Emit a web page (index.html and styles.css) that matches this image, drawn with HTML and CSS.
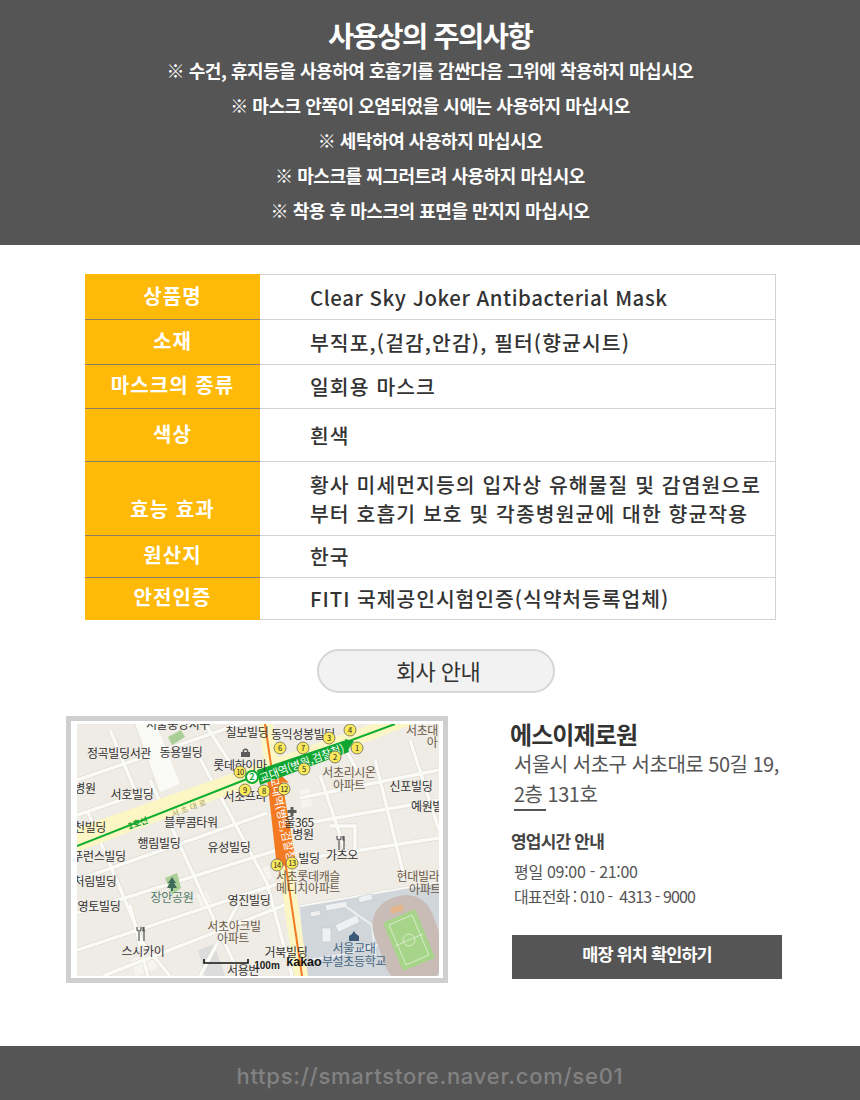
FILE: index.html
```html
<!DOCTYPE html>
<html lang="ko">
<head>
<meta charset="utf-8">
<title>사용상의 주의사항</title>
<link rel="stylesheet" href="styles.css">
</head>
<body>
<header class="notice">
  <h1>사용상의 주의사항</h1>
  <p class="first">※ 수건, 휴지등을 사용하여 호흡기를 감싼다음 그위에 착용하지 마십시오</p>
  <p>※ 마스크 안쪽이 오염되었을 시에는 사용하지 마십시오</p>
  <p>※ 세탁하여 사용하지 마십시오</p>
  <p>※ 마스크를 찌그러트려 사용하지 마십시오</p>
  <p>※ 착용 후 마스크의 표면을 만지지 마십시오</p>
</header>
<main>
  <table class="spec">
    <tr class="r1"><th>상품명</th><td>Clear Sky Joker Antibacterial Mask</td></tr>
    <tr class="r2"><th>소재</th><td>부직포,(겉감,안감), 필터(향균시트)</td></tr>
    <tr class="r3"><th>마스크의 종류</th><td>일회용 마스크</td></tr>
    <tr class="r4"><th>색상</th><td>흰색</td></tr>
    <tr class="r5"><th class="low">효능 효과</th><td>황사 미세먼지등의 입자상 유해물질 및 감염원으로<br>부터 호흡기 보호 및 각종병원균에 대한 향균작용</td></tr>
    <tr class="r6"><th>원산지</th><td>한국</td></tr>
    <tr class="r7"><th>안전인증</th><td>FITI 국제공인시험인증(식약처등록업체)</td></tr>
  </table>
  <div class="pill-row"><span class="pill">회사 안내</span></div>
  <section class="company">
    <div class="map">
      <svg viewBox="77 724 362 252" width="362" height="252" xmlns="http://www.w3.org/2000/svg">
        <defs>
          <path id="roads" d="M77 780L260 717M77 880L267 813M77 913L277 850M77 950L280 883M103 976L290 903M300 798L439 770M300 907L439 883M296 825L439 800M296 860L439 838M77 815L150 790M137 724L157 780M197 753L267 883L292 976M87 810L143 943L170 976M150 780L205 900L240 976M110 730L135 790M205 724L235 770M320 775L345 850M375 760L405 880M410 740L439 830M280 835L296 905M330 826L355 826L355 850M340 740L360 775M130 905L150 985M240 900L200 976"/>
        </defs>
        <rect class="land" x="77" y="724" width="362" height="252"/>
        <polygon class="block-g" points="198,950 214,944 225,976 205,976"/>
        <polygon class="block-l" points="196,895 206,890 212,905 203,910"/>
        <polygon class="block-l" points="130,960 152,952 158,968 136,976"/>
        <polygon class="block-l" points="257,870 268,866 272,878 262,882"/>
        <polygon class="block-l" points="300,790 310,788 312,806 302,808"/>
        <use href="#roads" class="road-edge"/>
        <use href="#roads" class="road"/>
        <polygon class="wide" points="137,724 156,724 180,784 160,792"/>
        <polygon class="park" points="168,737 181,730 185,737 172,745"/>
        <polygon class="park" points="165,878 177,873 181,888 172,895"/>
        <polygon class="school" points="300,907 439,883 439,976 306,976"/>
        <rect class="block-w" x="325" y="905" width="22" height="6" transform="rotate(-10 325 905)"/>
        <rect class="block-w" x="310" y="912" width="10" height="5" transform="rotate(-10 310 912)"/>
        <rect class="block-w" x="335" y="925" width="24" height="8" transform="rotate(-25 335 925)"/>
        <rect class="block-w" x="322" y="928" width="9" height="14"/>
        <rect class="block-w" x="358" y="897" width="14" height="6" transform="rotate(-14 358 897)"/>
        <path class="school-road" d="M310 960L340 955L378 945M345 906L372 925L375 955"/>
        <rect class="track" x="378" y="895" width="62" height="90" rx="28" transform="rotate(-20 409 940)"/>
        <polygon class="field" points="383,923 415,909 435,958 403,971"/>
        <path class="field-line" d="M389 925L412 915L429 955L406 965ZM409 940m-6 0a6 6 0 1 0 12 0a6 6 0 1 0-12 0M395 946L423 934"/>
        <polygon class="block-b" points="390,908 402,904 404,910 392,914"/>
        <polygon class="main-road" points="77,828 372,724 413,724 77,852"/>
        <polygon class="main-road" points="259,724 273,724 308,976 294,976"/>
        <path class="line-orange" d="M265 724L302 976"/>
        <path class="line-green" d="M77 846L252 777L395 724"/>
        <polygon class="orange-label" points="267,778 281,775 296,862 277,868"/>
        <polygon class="orange-arrow" points="274,768 289,783 268,780"/>
        <polygon class="green-label" points="257,770 346,740 349,752 260,785"/>
        <polygon class="green-arrow" points="345,739 354,741 348,750"/>
        <text class="lbl-rot-g" transform="translate(303 767) rotate(-20)">교대역(병원,검찰청)</text>
        <text class="lbl-rot-o" transform="translate(279 821) rotate(78)">교대역(병원,검찰청)</text>
        <text class="lbl-road" transform="translate(190 811) rotate(-20)">서 초 대 로</text>
        <text class="lbl-line" transform="translate(139 826) rotate(-20)">2호선</text>

        <text class="lbl" x="178" y="729">서울중앙지구</text>
        <text class="lbl" x="247" y="737">칠보빌딩</text>
        <text class="lbl" x="303" y="739">동익성봉빌딩</text>
        <text class="lbl br" x="422" y="735">서초대</text>
        <text class="lbl br" x="432" y="747">아</text>
        <text class="lbl" x="119" y="758">정곡빌딩서관</text>
        <text class="lbl" x="181" y="757">동용빌딩</text>
        <text class="lbl" x="240" y="770">롯데하이마</text>
        <text class="lbl br" x="349" y="777">서초리시온</text>
        <text class="lbl br" x="349" y="790">아파트</text>
        <text class="lbl" x="411" y="791">신포빌딩</text>
        <text class="lbl" x="245" y="801">서초프라</text>
        <text class="lbl" x="132" y="799">서호빌딩</text>
        <text class="lbl" x="85" y="793">병원</text>
        <text class="lbl" x="427" y="811">예원빌</text>
        <text class="lbl" x="299" y="827">울365</text>
        <text class="lbl" x="303" y="839">병원</text>
        <text class="lbl" x="191" y="827">블루콤타워</text>
        <text class="lbl" x="90" y="832">천빌딩</text>
        <text class="lbl" x="159" y="848">행림빌딩</text>
        <text class="lbl" x="229" y="852">유성빌딩</text>
        <text class="lbl" x="342" y="860">가츠오</text>
        <text class="lbl" x="99" y="861">푸런스빌딩</text>
        <text class="lbl" x="309" y="863">빌딩</text>
        <text class="lbl br" x="308" y="881">서초롯데캐슬</text>
        <text class="lbl br" x="308" y="893">메디치아파트</text>
        <text class="lbl br" x="418" y="881">현대빌라</text>
        <text class="lbl br" x="425" y="894">아파트</text>
        <text class="lbl gr" x="172" y="902">장안공원</text>
        <text class="lbl" x="95" y="886">처림빌딩</text>
        <text class="lbl" x="99" y="911">영토빌딩</text>
        <text class="lbl" x="249" y="905">영진빌딩</text>
        <text class="lbl br" x="234" y="931">서초아크빌</text>
        <text class="lbl br" x="233" y="943">아파트</text>
        <text class="lbl bl" x="354" y="953">서울교대</text>
        <text class="lbl bl" x="354" y="966">부설초등학교</text>
        <text class="lbl" x="143" y="956">스시카이</text>
        <text class="lbl" x="286" y="957">거북빌딩</text>
        <text class="lbl" x="243" y="975">서용빈</text>

        <path class="pin" d="M172 877l4 6h-2l3 5h-4v3h-2v-3h-4l3-5h-2z"/>
        <path class="pin-dark" d="M241 752h9v5h-9zM242.500 752a3 3.500 0 0 1 6 0h-1.500a1.500 2 0 0 0-3 0z"/>
        <path class="pin-dark" d="M290.500 807h3v3h3v3h-3v3h-3v-3h-3v-3h3z"/>
        <path class="fork" d="M339 841v9M337 836v2a2 2 0 0 0 4 0v-2M344 836v14M343 836v4h2"/>
        <path class="fork" d="M139 932v9M137 927v2a2 2 0 0 0 4 0v-2M144 927v14M143 927v4h2"/>
        <path class="pin-blue" d="M354 931l2 3 3 2v5h-10v-5l3-2z"/>

        <circle class="st2" cx="252" cy="777" r="6"/>
        <text class="st2t" x="252" y="780">2</text>

        <circle class="mk" cx="357" cy="748" r="6"/><text class="mkt" x="357" y="750.500">1</text>
        <circle class="mk" cx="335" cy="757" r="6"/><text class="mkt" x="335" y="759.500">2</text>
        <circle class="mk" cx="329" cy="738" r="6"/><text class="mkt" x="329" y="740.500">3</text>
        <circle class="mk" cx="350" cy="730" r="6"/><text class="mkt" x="350" y="732.500">4</text>
        <circle class="mk" cx="304" cy="769" r="6"/><text class="mkt" x="304" y="771.500">5</text>
        <circle class="mk" cx="280" cy="748" r="6"/><text class="mkt" x="280" y="750.500">6</text>
        <circle class="mk" cx="303" cy="748" r="6"/><text class="mkt" x="303" y="750.500">7</text>
        <circle class="mk" cx="264" cy="791" r="6"/><text class="mkt" x="264" y="793.500">8</text>
        <circle class="mk" cx="245" cy="790" r="6"/><text class="mkt" x="245" y="792.500">9</text>
        <circle class="mk" cx="240" cy="772" r="6"/><text class="mkt" x="240" y="774.500">10</text>
        <circle class="mk" cx="284" cy="789" r="6"/><text class="mkt" x="284" y="791.500">12</text>
        <circle class="mk" cx="292" cy="863" r="6"/><text class="mkt" x="292" y="865.500">13</text>
        <circle class="mk" cx="277" cy="865" r="6"/><text class="mkt" x="277" y="867.500">14</text>

        <path class="scale" d="M204 959v4h44v-4"/>
        <text class="scale-t" x="267" y="969">100m</text>
        <text class="kakao" x="304" y="966">kakao</text>
      </svg>
    </div>
    <div class="info">
      <h2>에스이제로원</h2>
      <p class="addr">서울시 서초구 서초대로 50길 19,<br>2층 131호</p>
      <div class="rule"></div>
      <h3>영업시간 안내</h3>
      <p class="hours">평일 09:00 - 21:00</p>
      <p class="hours tight">대표전화 : 010 -&nbsp; 4313 - 9000</p>
      <div class="cta">매장 위치 확인하기</div>
    </div>
  </section>
</main>
<footer class="foot">https://smartstore.naver.com/se01</footer>
</body>
</html>
```
FILE: styles.css
```css
* { box-sizing: border-box; }
html, body { margin: 0; padding: 0; }
body {
  position: relative;
  width: 860px;
  height: 1100px;
  background: #fff;
  font-family: "Noto Sans CJK KR", "Noto Sans", sans-serif;
  overflow: hidden;
}
.notice {
  height: 245px;
  background: #555;
  color: #fff;
  text-align: center;
  padding-top: 16px;
}
.notice h1 {
  margin: 0;
  font-size: 28.500px;
  line-height: 37px;
  font-weight: 700;
  letter-spacing: -1.5px;
}
.notice p {
  margin: 0;
  font-size: 18px;
  line-height: 35px;
  font-weight: 700;
  letter-spacing: -0.45px;
}
.spec {
  width: 691px;
  margin: 29px 0 0 85px;
  border-collapse: collapse;
  table-layout: fixed;
  color: #333;
}
.spec th {
  width: 175px;
  padding: 0 0 3px;
  background: #ffb908;
  color: #fff;
  font-size: 20px;
  font-weight: 700;
  letter-spacing: 1.100px;
  text-align: center;
  border: 0;
  border-top: 1px solid #8e7b68;
  border-bottom: 1px solid #8e7b68;
  line-height: 1.2;
}
.spec tr:first-child th { border-top-color: #ffb908; }
.spec tr:last-child th { border-bottom-color: #ffb908; }
.spec th.low { vertical-align: bottom; padding-bottom: 14px; }
.spec td {
  padding: 0 0 0 50px;
  font-size: 20.400px;
  font-weight: 500;
  line-height: 29px;
  letter-spacing: 1.100px;
  border: 1px solid #d2d2d2;
  border-left: 0;
  white-space: nowrap;
  color: #333;
}
.spec .r1 td { letter-spacing: 0.550px; }
.spec .r7 td { letter-spacing: 0.950px; }
.r1 { height: 45px; }
.r2 { height: 45px; }
.r3 { height: 44px; }
.r4 { height: 53px; }
.r5 { height: 74px; }
.r6 { height: 42px; }
.r7 { height: 42px; }
.pill-row {
  display: flex;
  justify-content: center;
  margin-top: 29px;
  padding-left: 12px;
}
.pill {
  width: 238px;
  height: 44px;
  padding-left: 4px;
  border: 2px solid #d6d6d6;
  border-radius: 22px;
  background: #f2f2f2;
  color: #333;
  font-size: 22px;
  line-height: 39px;
  text-align: center;
  letter-spacing: -0.6px;
}
.company {
  display: flex;
  margin: 23px 0 0 66px;
}
.map {
  width: 382px;
  height: 267px;
  padding: 3px 4px 2px 6px;
  background: #fff;
  border: 5px solid #cfcfcf;
  line-height: 0;
}
.map svg { display: block; }
.land { fill: #efece5; }
.block-g { fill: #dcdcdc; }
.block-l { fill: #f6f4ee; }
.road-edge { fill: none; stroke: #dedad2; stroke-width: 4.800; }
.road { fill: none; stroke: #fafaf7; stroke-width: 3.500; }
.wide { fill: #fafaf7; }
.park { fill: #a9cf96; }
.school { fill: #d0d6da; }
.block-w { fill: #eef0f1; stroke: #bcc3c8; stroke-width: 0.5; }
.school-road { fill: none; stroke: #eef0f1; stroke-width: 2; }
.track { fill: #c9bcb6; }
.field { fill: #a6d489; }
.field-line { fill: none; stroke: #e4f2d8; stroke-width: 0.8; }
.block-b { fill: #e3b48c; }
.main-road { fill: #fbf6c4; }
.line-orange { fill: none; stroke: #f47a22; stroke-width: 2; }
.line-green { fill: none; stroke: #10ae2f; stroke-width: 2; }
.orange-label, .orange-arrow { fill: #f47a22; }
.green-label, .green-arrow { fill: #10a632; }
.lbl {
  font-size: 12px;
  letter-spacing: -0.35px;
  fill: #333;
  text-anchor: middle;
}
.lbl.br { fill: #6b5a48; }
.lbl.gr { fill: #4f7a6a; }
.lbl.bl { fill: #466480; }
.lbl-rot-g, .lbl-rot-o {
  font-size: 11px;
  fill: #fff;
  text-anchor: middle;
  letter-spacing: -0.2px;
}
.lbl-road { font-size: 8px; fill: #a8a368; text-anchor: middle; }
.lbl-line { font-size: 8.500px; fill: #0f9e2c; font-weight: 700; text-anchor: middle; }
.pin { fill: #3f6b5a; }
.pin-dark { fill: #5a5a5a; }
.pin-blue { fill: #3c5a78; }
.fork { fill: none; stroke: #555; stroke-width: 1.200; }
.st2 { fill: #fff; stroke: #10ae2f; stroke-width: 2; }
.st2t { font-size: 9px; font-weight: 700; fill: #10ae2f; text-anchor: middle; }
.mk { fill: #f8e85a; stroke: #555; stroke-width: 0.7; }
.mkt { font-size: 7.500px; fill: #222; text-anchor: middle; letter-spacing: -0.4px; }
.scale { fill: none; stroke: #111; stroke-width: 1.600; }
.scale-t { font-size: 10px; font-weight: 700; fill: #222; text-anchor: middle; font-family: "Liberation Sans", sans-serif; }
.kakao { font-size: 12.500px; font-weight: 700; fill: #111; text-anchor: middle; font-family: "Liberation Sans", sans-serif; }
.info {
  width: 290px;
  margin-left: 62px;
  color: #555;
}
.info h2 {
  margin: 0;
  color: #333;
  font-size: 24px;
  line-height: 36px;
  font-weight: 700;
  letter-spacing: -0.9px;
}
.addr {
  margin: -3px 0 0 4px;
  font-size: 20px;
  line-height: 30px;
  font-weight: 400;
  letter-spacing: -0.5px;
  white-space: nowrap;
}
.rule {
  width: 32px;
  height: 2px;
  margin: 0 0 0 4px;
  background: #555;
}
.info h3 {
  margin: 18px 0 0 1px;
  color: #444;
  font-size: 17px;
  line-height: 24px;
  font-weight: 700;
  letter-spacing: -0.8px;
}
.hours {
  margin: 0 0 0 4px;
  font-size: 16px;
  line-height: 25px;
  letter-spacing: -0.3px;
  white-space: nowrap;
}
.info h3 + .hours { margin-top: 6px; }
.hours.tight { letter-spacing: -0.9px; }
.cta {
  width: 270px;
  height: 44px;
  margin: 26px 0 0 2px;
  background: #555;
  color: #fff;
  text-align: center;
  font-size: 17.500px;
  line-height: 38px;
  font-weight: 700;
  letter-spacing: -0.9px;
}
.foot {
  position: absolute;
  left: 0;
  right: 0;
  top: 1046px;
  height: 54px;
  background: #555;
  color: #828282;
  font-family: Inter, "Liberation Sans", sans-serif;
  font-size: 22px;
  font-weight: 500;
  line-height: 60px;
  text-align: center;
  letter-spacing: 0.750px;
}
```
